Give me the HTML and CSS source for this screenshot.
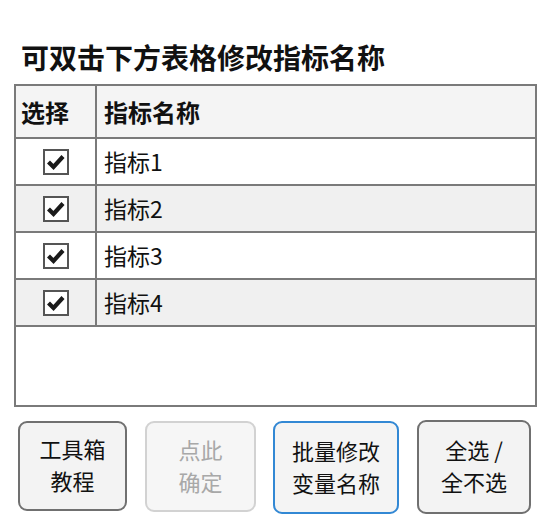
FILE: index.html
```html
<!DOCTYPE html>
<html lang="zh">
<head>
<meta charset="utf-8">
<link rel="stylesheet" href="styles.css">
</head>
<body>
<div class="page">
  <h1 class="title">可双击下方表格修改指标名称</h1>
  <div class="grid">
    <div class="row head">
      <div class="c-sel">选择</div>
      <div class="c-name">指标名称</div>
    </div>
    <div class="row odd">
      <div class="c-sel"><span class="cb"><svg viewBox="0 0 22 22"><polyline points="3.5,11 8.5,16 18,5.5"/></svg></span></div>
      <div class="c-name">指标1</div>
    </div>
    <div class="row even">
      <div class="c-sel"><span class="cb"><svg viewBox="0 0 22 22"><polyline points="3.5,11 8.5,16 18,5.5"/></svg></span></div>
      <div class="c-name">指标2</div>
    </div>
    <div class="row odd">
      <div class="c-sel"><span class="cb"><svg viewBox="0 0 22 22"><polyline points="3.5,11 8.5,16 18,5.5"/></svg></span></div>
      <div class="c-name">指标3</div>
    </div>
    <div class="row even">
      <div class="c-sel"><span class="cb"><svg viewBox="0 0 22 22"><polyline points="3.5,11 8.5,16 18,5.5"/></svg></span></div>
      <div class="c-name">指标4</div>
    </div>
    <div class="empty"></div>
  </div>
  <div class="buttons">
    <button class="btn b1"><span class="ln">工具箱</span><span class="ln">教程</span></button>
    <button class="btn b2 disabled"><span class="ln">点此</span><span class="ln">确定</span></button>
    <button class="btn b3 focus"><span class="ln">批量修改</span><span class="ln">变量名称</span></button>
    <button class="btn b4"><span class="ln">全选 /</span><span class="ln">全不选</span></button>
  </div>
</div>
</body>
</html>
```
FILE: styles.css
```css
* { box-sizing: border-box; }
html, body { margin: 0; padding: 0; background: #fff; }
body {
  font-family: "Noto Sans CJK SC", "Noto Sans", "Liberation Sans", sans-serif;
  color: #111;
}
.page {
  padding: 39px 0 0 14px;
  width: 556px;
}
.title {
  margin: 0 0 9px 7px;
  font-size: 28px;
  line-height: 36px;
  font-weight: 700;
  color: #111;
}
.grid {
  width: 523px;
  height: 323px;
  border: 2px solid #7a7a7a;
  display: flex;
  flex-direction: column;
}
.row {
  display: flex;
  border-bottom: 2px solid #7a7a7a;
  height: 47px;
  font-size: 23px;
}
.row.head {
  height: 53px;
  background: #f4f4f4;
  font-weight: 700;
  font-size: 24px;
}
.row.odd { background: #fff; }
.row.even { background: #f0f0f0; }
.c-sel {
  width: 81px;
  border-right: 2px solid #7a7a7a;
  display: flex;
  align-items: center;
  justify-content: center;
}
.head .c-sel {
  justify-content: flex-start;
  padding-left: 5px;
}
.c-name {
  flex: 1;
  display: flex;
  align-items: center;
  padding-left: 7px;
  padding-bottom: 2px;
}
.head .c-name { padding-bottom: 0; }
.cb {
  width: 26px;
  height: 26px;
  border: 2px solid #555;
  background: #fff;
  display: flex;
  margin-left: 1px;
}
.cb svg {
  width: 22px;
  height: 22px;
}
.cb polyline {
  fill: none;
  stroke: #1a1a1a;
  stroke-width: 4.2;
  stroke-linecap: butt;
  stroke-linejoin: miter;
}
.empty { flex: 1; background: #fff; }
.buttons {
  display: flex;
  align-items: flex-start;
  gap: 18px;
  margin-top: 14px;
  padding-left: 4px;
}
.btn {
  font-family: "Noto Sans CJK SC", "Noto Sans", "Liberation Sans", sans-serif;
  font-size: 22px;
  color: #111;
  background: #f3f3f3;
  border: 2px solid #707070;
  border-radius: 9px;
  padding: 0 0 4px;
  display: flex;
  flex-direction: column;
  align-items: center;
  justify-content: center;
}
.ln {
  display: block;
  line-height: 32px;
  white-space: nowrap;
}
.b1 { width: 109px; height: 90px; }
.b2 { width: 111px; height: 91px; }
.b3 { width: 126px; height: 93px; margin-left: -1px; }
.b4 { width: 114px; height: 94px; margin-top: -1px; }
.disabled {
  border-color: #d2d2d2;
  background: #f6f6f6;
  color: #a8a8a8;
}
.focus {
  border-color: #3288d4;
  background: #f4f4f4;
}
```
